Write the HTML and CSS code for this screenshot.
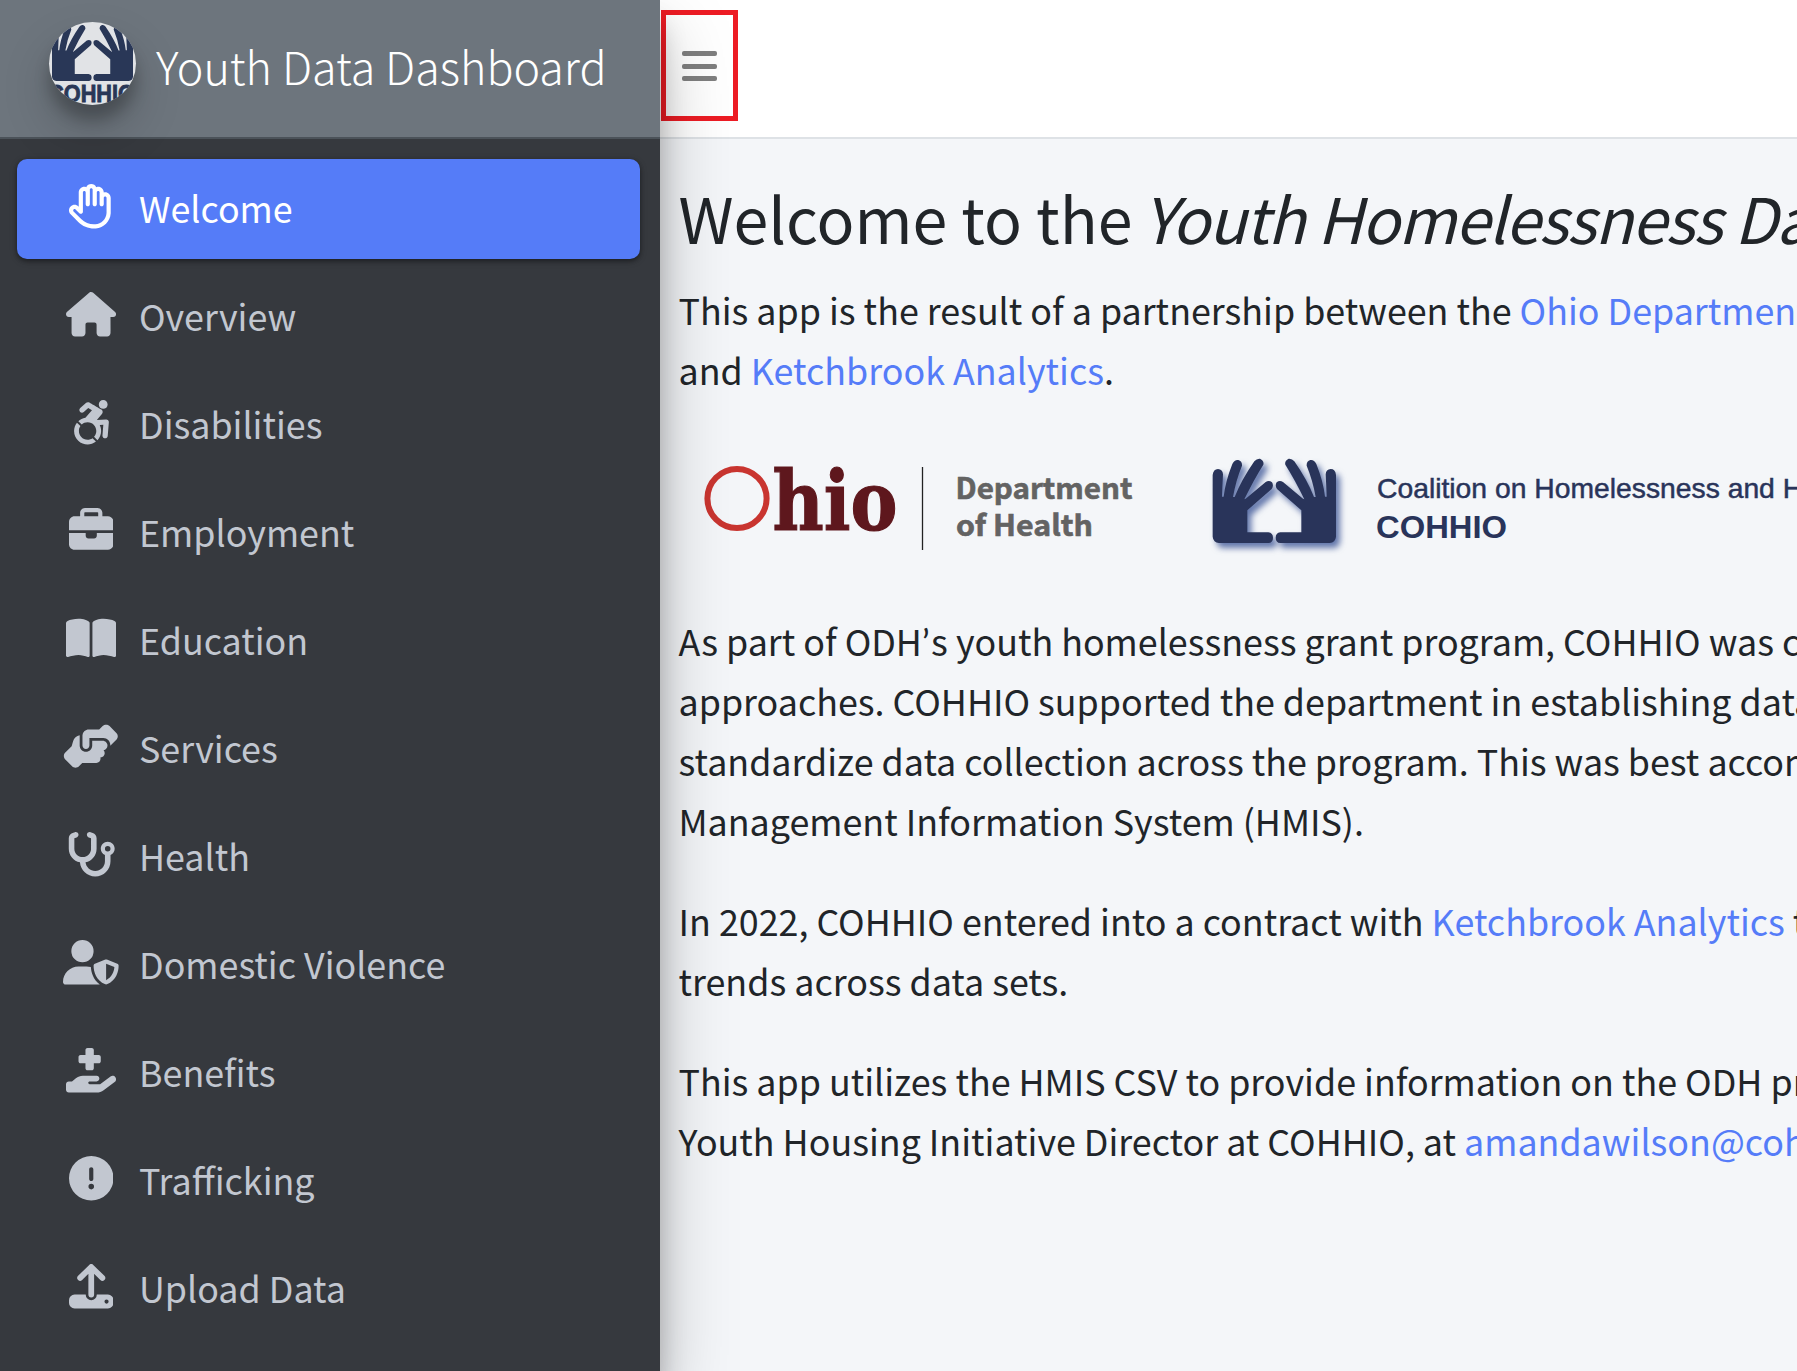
FILE: index.html
```html
<!DOCTYPE html>
<html lang="en">
<head>
<meta charset="utf-8">
<title>Youth Data Dashboard</title>
<link rel="stylesheet" href="styles.css">
</head>
<body>
<svg class="defs" aria-hidden="true">
  <defs>
    <path id="hand-half" d="M38 290V105Q40 87 54 87Q68 88 69 103Q67 140 66 170H71Q76 125 97 72Q104 58 115 60Q127 64 126 77Q108 120 99 171H104Q124 120 163 64Q170 55 180 56Q193 62 190 74Q162 118 133 178L137 176L197 126Q207 120 216 127Q222 137 215 147L142 211V277H205Q219 279 219 293Q219 308 205 309H57Q40 308 38 290Z"/>
    <g id="hands"><use href="#hand-half"/><use href="#hand-half" transform="translate(446 0) scale(-1 1)"/></g>
  </defs>
</svg>
<div class="app">
  <aside class="sidebar">
    <a class="brand">
      <svg class="brand-logo" viewBox="0 0 87 83">
        <svg x="3" y="3" width="81" height="56" viewBox="38 56 370 253" preserveAspectRatio="none"><use href="#hands"/></svg>
        <text x="-1" y="80" textLength="87" lengthAdjust="spacingAndGlyphs">COHHIO</text>
      </svg>
      <span class="brand-text">Youth Data Dashboard</span>
    </a>
    <nav class="menu">
      <a class="item active"><span class="icon"><svg viewBox="0 0 512 512"><path d="M256 0c-25.3 0-47.2 14.7-57.6 36c-7-2.6-14.5-4-22.4-4c-35.3 0-64 28.7-64 64V261.5l-2.7-2.7c-25-25-65.5-25-90.5 0s-25 65.5 0 90.5L106.5 437c48 48 113.1 75 181 75H296h8c1.5 0 3-.1 4.5-.4c91.7-6.2 165-79.4 171.1-171.1c.3-1.5 .4-3 .4-4.5V160c0-35.3-28.7-64-64-64c-5.5 0-10.9 .7-16 2V96c0-35.3-28.7-64-64-64c-7.9 0-15.4 1.4-22.4 4C303.2 14.7 281.3 0 256 0zM240 96.1c0 0 0-.1 0-.1V64c0-8.8 7.2-16 16-16s16 7.2 16 16V95.9c0 0 0 .1 0 .1V232c0 13.3 10.7 24 24 24s24-10.7 24-24V96c0 0 0 0 0-.1c0-8.8 7.2-16 16-16s16 7.2 16 16v55.9c0 0 0 .1 0 .1v80c0 13.3 10.7 24 24 24s24-10.7 24-24V160.1c0 0 0-.1 0-.1c0-8.8 7.2-16 16-16s16 7.2 16 16V332.9c-.1 .6-.1 1.3-.2 1.9c-3.4 69.7-59.3 125.6-129 129c-.6 0-1.3 .1-1.9 .2H296h-8.5c-55.2 0-108.1-21.9-147.1-60.9L52.7 315.3c-6.2-6.2-6.2-16.4 0-22.6s16.4-6.2 22.6 0L119 336.4c6.9 6.9 17.2 8.9 26.2 5.2s14.8-12.5 14.8-22.2V96c0-8.8 7.2-16 16-16c8.8 0 16 7.1 16 15.9V232c0 13.3 10.7 24 24 24s24-10.7 24-24V96.1z"/></svg></span><span class="label">Welcome</span></a>
      <a class="item"><span class="icon"><svg viewBox="0 0 576 512"><path d="M575.8 255.5c0 18-15 32.1-32 32.1h-32l.7 160.2c0 2.7-.2 5.4-.5 8.1V472c0 22.1-17.9 40-40 40H392c-22.1 0-40-17.9-40-40V376c0-13.3-10.7-24-24-24H248c-13.3 0-24 10.7-24 24v96c0 22.1-17.9 40-40 40H104c-22.1 0-40-17.9-40-40V287.6H32c-18 0-32-14-32-32.1c0-9 3-17 10-24L266.4 8c7-7 15-8 22-8s15 2 21 7L564.8 231.5c8 7 12 15 11 24z"/></svg></span><span class="label">Overview</span></a>
      <a class="item"><span class="icon"><svg viewBox="0 0 448 512"><path d="M423.9 255.8L411 413.1c-3.3 40.7-63.9 35.1-60.6-4.9l10-122.5-41.1 2.3c10.1 20.7 15.8 43.9 15.8 68.5 0 41.2-16.1 78.7-42.3 106.5l-39.3-39.3c57.9-63.7 13.1-167.2-74-167.2-25.9 0-49.5 9.9-67.2 26L73 243.2c22-20.7 50.1-35.1 81.4-40.2l75.3-85.7-42.6-24.8-51.6 46c-30 26.8-70.6-18.5-40.5-45.4l68-60.7c9.8-8.8 24.1-10.2 35.5-3.6 0 0 139.3 80.9 139.5 81.1 16.2 10.1 20.7 36 6.1 52.6L285.7 229l106.1-5.9c18.5-1.1 33.6 14.4 32.1 32.7zm-64.9-154c28.1 0 50.9-22.8 50.9-50.9C409.9 22.8 387.1 0 359 0c-28.1 0-50.9 22.8-50.9 50.9 0 28.1 22.8 50.9 50.9 50.9zM179.6 456.5c-80.6 0-127.4-90.6-82.7-156.1l-39.7-39.7C36.4 287 24 320.3 24 356.4c0 130.7 150.7 201.4 251.4 122.5l-39.7-39.7c-16 10.9-35.3 17.3-56.1 17.3z"/></svg></span><span class="label">Disabilities</span></a>
      <a class="item"><span class="icon"><svg viewBox="0 0 512 512"><path d="M184 48H328c4.4 0 8 3.6 8 8V96H176V56c0-4.4 3.6-8 8-8zm-56 8V96H64C28.7 96 0 124.7 0 160v96H192 320 512V160c0-35.3-28.7-64-64-64H384V56c0-30.9-25.1-56-56-56H184c-30.9 0-56 25.1-56 56zM512 288H320v32c0 17.7-14.3 32-32 32H224c-17.7 0-32-14.3-32-32V288H0V416c0 35.3 28.7 64 64 64H448c35.3 0 64-28.7 64-64V288z"/></svg></span><span class="label">Employment</span></a>
      <a class="item"><span class="icon"><svg viewBox="0 0 576 512"><path d="M249.6 471.5c10.8 3.8 22.4-4.1 22.4-15.5V78.6c0-4.2-1.6-8.4-5-11C247.4 52 202.4 32 144 32C93.5 32 46.3 45.3 18.1 56.1C6.8 60.5 0 71.7 0 83.8V454.1c0 11.9 12.8 20.2 24.1 16.5C55.6 460.1 105.5 448 144 448c33.9 0 79 14 105.6 23.5zm76.8 0C353 462 398.1 448 432 448c38.5 0 88.4 12.1 119.9 22.6c11.3 3.8 24.1-4.6 24.1-16.5V83.8c0-12.1-6.8-23.3-18.1-27.6C529.7 45.3 482.5 32 432 32c-58.4 0-103.4 20-123 35.6c-3.3 2.6-5 6.8-5 11V456c0 11.4 11.7 19.3 22.4 15.5z"/></svg></span><span class="label">Education</span></a>
      <a class="item"><span class="icon"><svg viewBox="0 0 640 512"><path d="M544 248v3.3l69.7-69.7c21.9-21.9 21.9-57.3 0-79.2L535.6 24.4c-21.9-21.9-57.3-21.9-79.2 0L416.3 64.5c-2.7-.3-5.5-.5-8.3-.5H296c-37.1 0-67.6 28-71.6 64H224V248c0 22.1 17.9 40 40 40s40-17.9 40-40V176c0 0 0-.1 0-.1V160l16 0 136 0c0 0 0 0 .1 0H464c44.2 0 80 35.8 80 80v8zM336 192v56c0 39.8-32.2 72-72 72s-72-32.2-72-72V129.4c-35.9 6.2-65.8 32.3-76 68.2L99.5 255.2 26.3 328.4c-21.9 21.9-21.9 57.3 0 79.2l78.1 78.1c21.9 21.9 57.3 21.9 79.2 0l37.7-37.7c.9 0 1.8 .1 2.7 .1H384c26.5 0 48-21.5 48-48c0-5.6-1-11-2.7-16H432c26.5 0 48-21.5 48-48c0-12.8-5-24.4-13.2-33c25.7-5 45.1-27.6 45.2-54.8v-.4c-.1-30.8-25.1-55.8-56-55.8c0 0 0 0 0 0l-120 0z"/></svg></span><span class="label">Services</span></a>
      <a class="item"><span class="icon"><svg viewBox="0 0 576 512"><path d="M142.4 21.9c5.6 16.8-3.5 34.9-20.2 40.5L96 71.1V192c0 53 43 96 96 96s96-43 96-96V71.1l-26.1-8.7c-16.8-5.6-25.8-23.7-20.2-40.5s23.7-25.8 40.5-20.2l26.1 8.7C334.4 19.1 352 43.5 352 71.1V192c0 77.2-54.6 141.6-127.3 156.7C231 404.6 278.4 448 336 448c61.9 0 112-50.1 112-112V265.3c-28.3-12.3-48-40.5-48-73.3c0-44.2 35.8-80 80-80s80 35.8 80 80c0 32.8-19.7 61-48 73.3V336c0 97.2-78.8 176-176 176c-92.9 0-168.9-71.9-175.5-163.1C87.2 334.2 32 269.6 32 192V71.1c0-27.5 17.6-52 43.8-60.7l26.1-8.7c16.8-5.6 34.9 3.5 40.5 20.2zM480 224a32 32 0 1 0 0-64 32 32 0 1 0 0 64z"/></svg></span><span class="label">Health</span></a>
      <a class="item"><span class="icon"><svg viewBox="0 0 640 512"><path d="M224 256A128 128 0 1 0 224 0a128 128 0 1 0 0 256zm-45.7 48C79.8 304 0 383.8 0 482.3C0 498.7 13.3 512 29.7 512H418.3c1.8 0 3.5-.2 5.3-.5c-76.3-55.1-99.8-141-103.1-200.2c-16.1-4.8-33.1-7.3-50.7-7.3H178.3zm308.8-78.3l-120 48C358 277.4 352 286.2 352 296c0 63.3 25.9 168.8 134.8 214.2c5.9 2.5 12.6 2.5 18.5 0C614.1 464.8 640 359.3 640 296c0-9.8-6-18.6-15.1-22.3l-120-48c-5.7-2.3-12.1-2.3-17.8 0zM591.4 312c-3.9 50.7-27.2 116.7-95.4 149.7V273.8L591.4 312z"/></svg></span><span class="label">Domestic Violence</span></a>
      <a class="item"><span class="icon"><svg viewBox="0 0 576 512"><path d="M224 24V80H168c-13.3 0-24 10.7-24 24v48c0 13.3 10.7 24 24 24h56v56c0 13.3 10.7 24 24 24h48c13.3 0 24-10.7 24-24V176h56c13.3 0 24-10.7 24-24V104c0-13.3-10.7-24-24-24H320V24c0-13.3-10.7-24-24-24H248c-13.3 0-24 10.7-24 24zM559.7 392.2c17.8-13.1 21.6-38.1 8.5-55.9s-38.1-21.6-55.9-8.5L392.6 416H272c-8.8 0-16-7.2-16-16s7.2-16 16-16h16 64c17.7 0 32-14.3 32-32s-14.3-32-32-32H288 272 193.7c-29.1 0-57.3 9.9-80 28L68.8 384H32c-17.7 0-32 14.3-32 32v64c0 17.7 14.3 32 32 32H192 352.5c29 0 57.3-9.3 80.7-26.5l126.6-93.3z"/></svg></span><span class="label">Benefits</span></a>
      <a class="item"><span class="icon"><svg viewBox="0 0 512 512"><path d="M256 512A256 256 0 1 0 256 0a256 256 0 1 0 0 512zm0-384c13.3 0 24 10.7 24 24V264c0 13.3-10.7 24-24 24s-24-10.7-24-24V152c0-13.3 10.7-24 24-24zM224 352a32 32 0 1 1 64 0 32 32 0 1 1 -64 0z"/></svg></span><span class="label">Trafficking</span></a>
      <a class="item"><span class="icon"><svg viewBox="0 0 512 512"><path d="M256 352V42M128 160L256 34L384 160" fill="none" stroke="currentColor" stroke-width="66" stroke-linecap="round" stroke-linejoin="round"/><path fill-rule="evenodd" d="M64 352H192a64 64 0 0 0 128 0H448a64 64 0 0 1 64 64v32a64 64 0 0 1-64 64H64a64 64 0 0 1-64-64V416a64 64 0 0 1 64-64zM432 408a24 24 0 1 0 0 48 24 24 0 1 0 0-48z"/></svg></span><span class="label">Upload Data</span></a>
    </nav>
  </aside>
  <div class="page">
    <header class="navbar">
      <button class="toggle" aria-label="Toggle menu"><span class="bar"></span><span class="bar"></span><span class="bar"></span></button>
    </header>
    <main class="content">
      <h1>Welcome to the <em>Youth Homelessness Dashboard</em></h1>
      <p>This app is the result of a partnership between the <a>Ohio Department of Health</a>,<br>and <a>Ketchbrook Analytics</a>.</p>
      <div class="logos">
        <svg class="logo-ohio" width="470" height="131" viewBox="0 0 470 131">
          <circle cx="57" cy="59.5" r="29.6" fill="none" stroke="#c93530" stroke-width="6"/>
          <text class="ohio" x="92.5" y="90.500" textLength="125" lengthAdjust="spacingAndGlyphs">hio</text>
          <path d="M242.500 28V111" stroke="#222" stroke-width="1.300"/>
          <text class="dept" x="275.500" y="60" textLength="177" lengthAdjust="spacingAndGlyphs">Department</text>
          <text class="dept" x="276" y="97" textLength="137" lengthAdjust="spacingAndGlyphs">of Health</text>
        </svg>
        <svg class="logo-cohhio" width="900" height="131" viewBox="0 0 900 131">
          <g class="hands"><svg x="50" y="1" width="160" height="130" viewBox="0 0 480 390"><use href="#hands"/></svg></g>
          <text class="coal" x="227" y="59" textLength="607" lengthAdjust="spacingAndGlyphs">Coalition on Homelessness and Housing in Ohio</text>
          <text class="abbr" x="226" y="99" textLength="131" lengthAdjust="spacingAndGlyphs">COHHIO</text>
        </svg>
      </div>
      <p>As part of ODH<span class="apos">’</span>s youth homelessness grant program, COHHIO was contracted<br>approaches. COHHIO supported the department in establishing data<br>standardize data collection across the program. This was best accomplished<br>Management Information System (HMIS).</p>
      <p>In 2022, COHHIO entered into a contract with <a>Ketchbrook Analytics</a> to<br>trends across data sets.</p>
      <p>This app utilizes the HMIS CSV to provide information on the ODH program<br>Youth Housing Initiative Director at COHHIO, at <a>amandawilson@cohhio.org</a></p>
    </main>
  </div>
</div>
</body>
</html>
```
FILE: styles.css
```css
* { box-sizing: border-box; }
html, body { margin: 0; height: 100%; overflow: hidden; }
body {
  font-family: "Noto Sans CJK SC", "Noto Sans", sans-serif;
  font-size: 35.830px;
  line-height: 60px;
  color: #212529;
  background: #f4f6f9;
}
.defs { position: absolute; width: 0; height: 0; }
.app { display: flex; height: 100%; }

.sidebar {
  position: relative;
  z-index: 2;
  flex: 0 0 660px;
  background: #36393e;
  box-shadow: 0 35px 70px rgba(0,0,0,.25), 0 25px 25px rgba(0,0,0,.22);
}
.brand {
  display: flex;
  height: 139px;
  padding: 22px 0 0 49px;
  background: #6d757d;
  border-bottom: 2px solid #4b5259;
}
.brand-logo {
  flex: none;
  width: 87px;
  height: 83px;
  border-radius: 50%;
  background: #e1e3e6;
  fill: #293757;
  box-shadow: 0 25px 50px rgba(0,0,0,.19), 0 15px 15px rgba(0,0,0,.23);
}
.brand-logo text { font: bold 23px "Liberation Sans", sans-serif; stroke: #293757; stroke-width: .8px; }
.brand-text {
  margin: 14px 0 0 20px;
  font-size: 44.850px;
  font-weight: 300;
  line-height: 60px;
  color: #fff;
  white-space: nowrap;
}
.menu { display: flex; flex-direction: column; gap: 8px; padding: 20px 20px 0 17px; }
.item {
  display: flex;
  height: 100px;
  padding: 18px 0 0 34px;
  border-radius: 10px;
  color: #c2c7d0;
}
.active { background: #557cf8; color: #fff; box-shadow: 0 2px 7px rgba(0,0,0,.25), 0 2px 4px rgba(0,0,0,.3); }
.icon { display: flex; justify-content: center; width: 80px; margin-right: 8px; padding-top: 7px; }
.icon svg { height: 44.500px; fill: currentColor; }
.label { white-space: nowrap; }

.page { flex: 1; min-width: 0; overflow: hidden; }
.navbar { height: 139px; padding: 10px 0 0 1px; background: #fff; border-bottom: 2px solid #dee2e6; }
.toggle {
  display: flex;
  flex-direction: column;
  gap: 7.500px;
  width: 77px;
  height: 111px;
  padding: 36px 0 0 16px;
  border: 5px solid #ed1c24;
  background: transparent;
}
.bar { width: 35px; height: 5px; border-radius: 2px; background: #7f7f7f; }
.content { padding: 36px 0 0 18.500px; white-space: nowrap; }
h1 { margin: 0 0 20px; font-size: 62.700px; font-weight: 400; line-height: 84px; }
h1 em { letter-spacing: -1.250px; margin-left: -4px; }
p { margin: 0 0 40px; }
a { color: #557cf8; }
.apos { font-family: Lato, sans-serif; line-height: 0; letter-spacing: 1.500px; }
.logos { display: flex; height: 131px; margin: 0 0 40px 1.500px; }
.logos svg { flex: none; }
.ohio { font: bold 82px "DejaVu Serif", serif; fill: #5e171d; stroke: #5e171d; stroke-width: 1.2px; }
.dept { font: bold 29px "Noto Sans CJK SC", sans-serif; fill: #636363; stroke: #636363; stroke-width: .6px; }
.coal { font: 28.500px "Liberation Sans", sans-serif; fill: #29345a; stroke: #29345a; stroke-width: .5px; }
.abbr { font: bold 31px "Liberation Sans", sans-serif; fill: #29345a; }
.hands { fill: #29345a; filter: drop-shadow(4px 5.500px 3px rgba(60,85,150,.8)); }
```
